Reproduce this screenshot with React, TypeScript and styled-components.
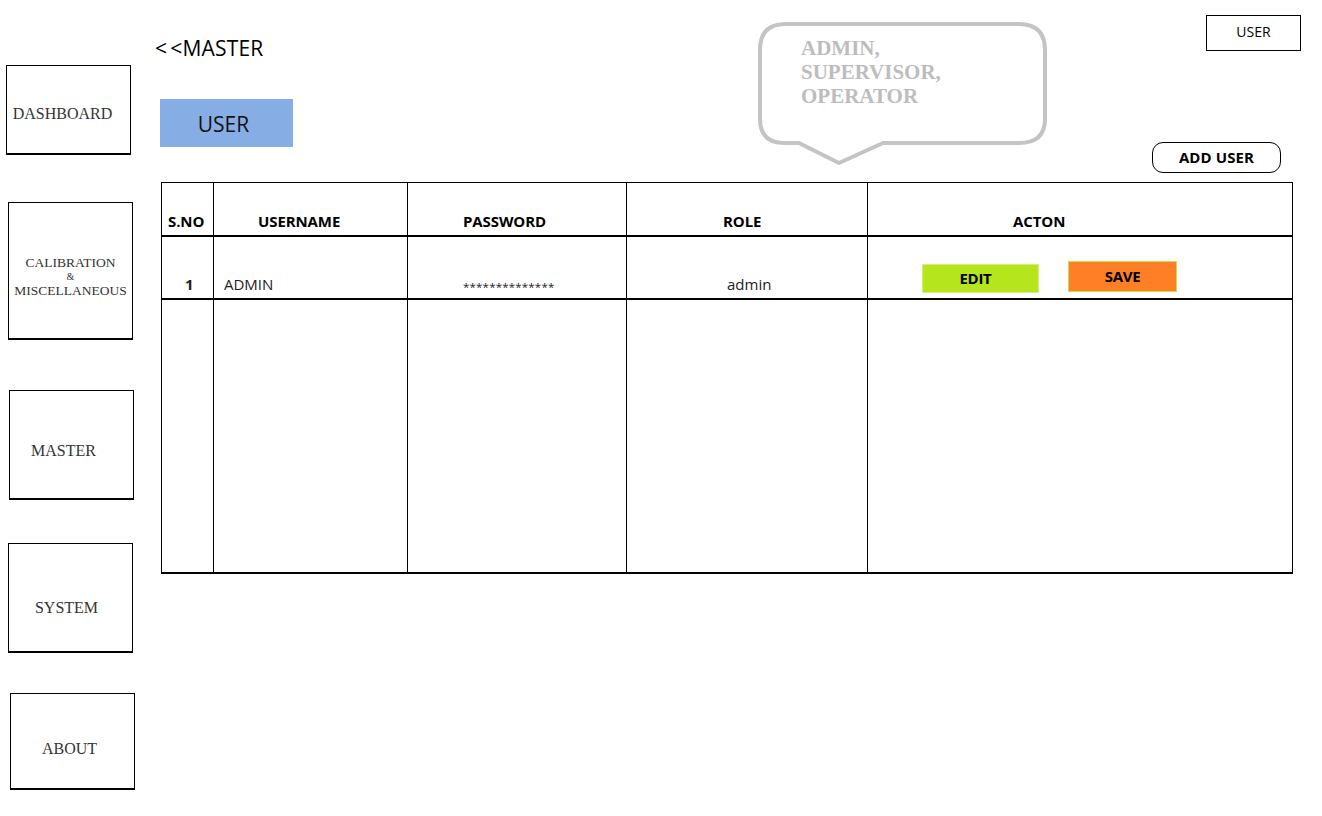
import React from 'react';
import styled, { createGlobalStyle } from 'styled-components';

const GlobalStyle = createGlobalStyle`
    html, body {
        margin: 0;
        padding: 0;
        background: #ffffff;
    }
    body {
        font-family: "Open Sans", "Noto Sans", sans-serif;
        color: #000;
    }
`;

// dx / dy: how far the label sits off the centre of its box
const navItems = [
    { label: ['DASHBOARD'], height: 90, gap: 0, left: 6, size: 16, dx: -6, dy: 5 },
    { label: ['CALIBRATION', '&', 'MISCELLANEOUS'], height: 138, gap: 47, left: 8, size: 13.5, dx: 0, dy: 6 },
    { label: ['MASTER'], height: 110, gap: 50, left: 9, size: 16, dx: -8, dy: 7 },
    { label: ['SYSTEM'], height: 110, gap: 43, left: 8, size: 16, dx: -4, dy: 11 },
    { label: ['ABOUT'], height: 97, gap: 40, left: 10, size: 16, dx: -3, dy: 8 },
];

const rows = [{ sno: '1', username: 'ADMIN', password: '**************', role: 'admin' }];

const App = () => (
    <Page>
        <GlobalStyle />
        <Sidebar>
            {navItems.map(item => (
                <NavBox
                    key={item.label[0]}
                    $height={item.height}
                    $gap={item.gap}
                    $left={item.left}
                    $size={item.size}
                    $dx={item.dx}
                    $dy={item.dy}
                >
                    {item.label.map((line, i) => (
                        <NavLine key={i} $small={line === '&'}>{line}</NavLine>
                    ))}
                </NavBox>
            ))}
        </Sidebar>

        <Main>
            <TopBar>
                <BackTitle><Chevron>&lt;</Chevron>&lt;MASTER</BackTitle>
                <UserBox>USER</UserBox>
            </TopBar>

            <Tab>USER</Tab>

            <Bubble>
                <svg width="292" height="146" viewBox="0 0 292 146">
                    <path
                        d="M28 3 H262 Q288 3 288 29 V98 Q288 122 262 122 H126 L82 142 L42 122 H28 Q3 122 3 98 V29 Q3 3 28 3 Z"
                        fill="#ffffff"
                        stroke="#c4c4c4"
                        strokeWidth="4"
                        strokeLinejoin="round"
                    />
                </svg>
                <BubbleText>
                    ADMIN,<br />
                    SUPERVISOR,<br />
                    OPERATOR
                </BubbleText>
            </Bubble>

            <ActionRow>
                <AddButton>ADD USER</AddButton>
            </ActionRow>

            <Table>
                <HeadCell $pad={6}>S.NO</HeadCell>
                <HeadCell $pad={44}>USERNAME</HeadCell>
                <HeadCell $pad={55}>PASSWORD</HeadCell>
                <HeadCell $pad={96}>ROLE</HeadCell>
                <HeadCell $pad={145} $last>ACTON</HeadCell>

                {rows.map(row => (
                    <React.Fragment key={row.sno}>
                        <DataCell $pad={23} $bold>{row.sno}</DataCell>
                        <DataCell $pad={10}>{row.username}</DataCell>
                        <DataCell $pad={55}><Stars>{row.password}</Stars></DataCell>
                        <DataCell $pad={100}>{row.role}</DataCell>
                        <ActionCell>
                            <ActionButton $bg="#b5e61d" $border="#d8f07a" $width={117} $height={29} $shift={-10}>
                                EDIT
                            </ActionButton>
                            <ActionButton $bg="#ff7f27" $border="#c9e04a" $width={109} $height={31} $offset={-3}>
                                SAVE
                            </ActionButton>
                        </ActionCell>
                    </React.Fragment>
                ))}

                <FillCell />
                <FillCell />
                <FillCell />
                <FillCell />
                <FillCell $last />
            </Table>
        </Main>
    </Page>
);

export default App;

const Page = styled.div`
    position: relative;
    display: flex;
    width: 1322px;
    height: 816px;
    overflow: hidden;
`;

const Sidebar = styled.nav`
    width: 155px;
    flex: 0 0 155px;
    padding-top: 65px;
    display: flex;
    flex-direction: column;
    align-items: flex-start;
    box-sizing: border-box;
`;

const NavBox = styled.div<{
    $height: number;
    $gap: number;
    $left: number;
    $size: number;
    $dx: number;
    $dy: number;
}>`
    width: 125px;
    height: ${p => p.$height}px;
    margin-top: ${p => p.$gap}px;
    margin-left: ${p => p.$left}px;
    padding-top: ${p => Math.max(0, p.$dy * 2)}px;
    padding-right: ${p => Math.max(0, -p.$dx * 2)}px;
    box-sizing: border-box;
    border: 1px solid #000;
    border-bottom-width: 2px;
    display: flex;
    flex-direction: column;
    justify-content: center;
    align-items: center;
    font-family: "Liberation Serif", "DejaVu Serif", serif;
    font-size: ${p => p.$size}px;
    color: #333;
    line-height: 1.15;
    white-space: nowrap;
`;

const NavLine = styled.span<{ $small?: boolean }>`
    font-size: ${p => (p.$small ? '10px' : 'inherit')};
    line-height: ${p => (p.$small ? '12px' : 'inherit')};
`;

const Main = styled.main`
    flex: 1;
    display: flex;
    flex-direction: column;
    padding-top: 15px;
    padding-right: 21px;
`;

const TopBar = styled.div`
    display: flex;
    justify-content: space-between;
    align-items: flex-start;
    height: 36px;
`;

const BackTitle = styled.div`
    margin-top: 20px;
    font-size: 21px;
    line-height: 26px;
    letter-spacing: 0.2px;
`;

const Chevron = styled.span`
    margin-right: 3px;
`;

const UserBox = styled.div`
    width: 95px;
    height: 36px;
    box-sizing: border-box;
    border: 1px solid #000;
    display: flex;
    align-items: center;
    justify-content: center;
    padding-bottom: 3px;
    font-size: 14px;
`;

const Tab = styled.div`
    margin-top: 48px;
    margin-left: 5px;
    width: 133px;
    height: 48px;
    box-sizing: border-box;
    padding-right: 6px;
    padding-top: 2px;
    background: #86aee4;
    display: flex;
    align-items: center;
    justify-content: center;
    font-size: 21px;
    color: #111;
`;

const Bubble = styled.div`
    position: absolute;
    left: 757px;
    top: 21px;
    width: 292px;
    height: 146px;

    svg {
        display: block;
    }
`;

const BubbleText = styled.div`
    position: absolute;
    left: 44px;
    top: 15px;
    font-family: "Liberation Serif", "DejaVu Serif", serif;
    font-weight: bold;
    font-size: 21px;
    line-height: 24px;
    color: #bdbdbd;
`;

const ActionRow = styled.div`
    display: flex;
    justify-content: flex-end;
    margin-top: -5px;
    padding-right: 20px;
`;

const AddButton = styled.div`
    width: 129px;
    height: 31px;
    box-sizing: border-box;
    border: 1px solid #000;
    border-radius: 11px;
    display: flex;
    align-items: center;
    justify-content: center;
    padding-bottom: 1px;
    font-size: 15px;
    font-weight: bold;
    letter-spacing: 0.1px;
`;

const Table = styled.div`
    margin-top: 9px;
    margin-left: 6px;
    width: 1132px;
    display: grid;
    grid-template-columns: 52px 194px 219px 241px 1fr;
    grid-template-rows: 54px 63px 272px;
    border: 1px solid #000;
    border-bottom-width: 2px;
    box-sizing: border-box;
`;

const HeadCell = styled.div<{ $pad: number; $last?: boolean }>`
    display: flex;
    align-items: flex-end;
    padding-left: ${p => p.$pad}px;
    padding-bottom: 4px;
    border-right: ${p => (p.$last ? 'none' : '1px solid #000')};
    border-bottom: 2px solid #000;
    font-size: 15px;
    font-weight: bold;
    line-height: 20px;
    letter-spacing: -0.1px;
`;

const DataCell = styled.div<{ $pad: number; $bold?: boolean }>`
    display: flex;
    align-items: flex-end;
    padding-left: ${p => p.$pad}px;
    padding-bottom: 4px;
    border-right: 1px solid #000;
    border-bottom: 2px solid #000;
    font-size: 15px;
    font-weight: ${p => (p.$bold ? 'bold' : 'normal')};
    line-height: 20px;
    color: #222;
`;

const Stars = styled.span`
    font-size: 11.5px;
    letter-spacing: 0.2px;
    margin-bottom: -3px;
`;

const ActionCell = styled.div`
    display: flex;
    align-items: flex-start;
    gap: 29px;
    padding-left: 54px;
    padding-top: 27px;
    border-bottom: 2px solid #000;
`;

const ActionButton = styled.div<{
    $bg: string;
    $border: string;
    $width: number;
    $height: number;
    $offset?: number;
    $shift?: number;
}>`
    width: ${p => p.$width}px;
    height: ${p => p.$height}px;
    box-sizing: border-box;
    margin-top: ${p => p.$offset ?? 0}px;
    padding-right: ${p => Math.max(0, -(p.$shift ?? 0))}px;
    padding-bottom: 2px;
    background: ${p => p.$bg};
    border: 1px solid ${p => p.$border};
    display: flex;
    align-items: center;
    justify-content: center;
    font-size: 15px;
    font-weight: bold;
    letter-spacing: -0.3px;
`;

const FillCell = styled.div<{ $last?: boolean }>`
    border-right: ${p => (p.$last ? 'none' : '1px solid #000')};
`;
